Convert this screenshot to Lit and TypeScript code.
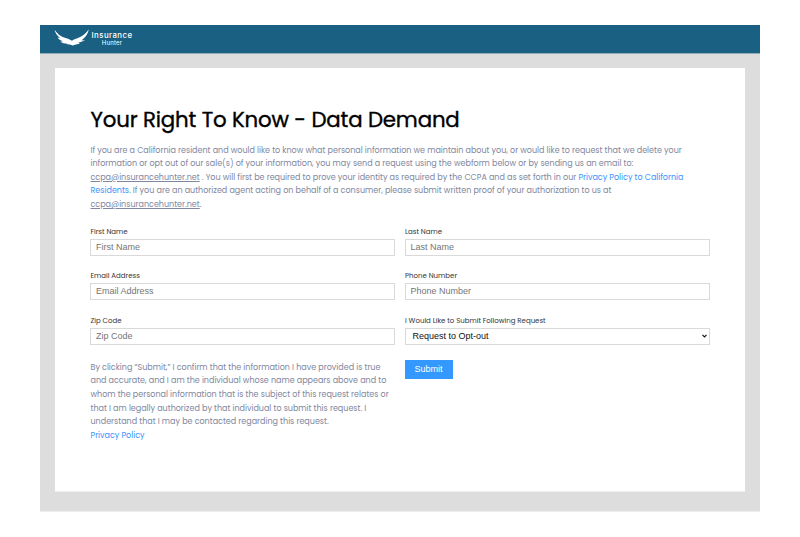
import { LitElement, html, css } from "lit";
import { customElement } from "lit/decorators.js";

@customElement("app-root")
class AppRoot extends LitElement {
  static styles = css`
    :host {
      display: block;
      box-sizing: border-box;
      height: 537px;
      padding: 25px 40px 0;
      background: #fff;
      overflow: hidden;
      font-family: Poppins, Inter, "Open Sans", sans-serif;
    }
    * { box-sizing: border-box; }
    .page { height: 487px; background: #ddd; border-bottom: 1px solid #eee; display: flex; flex-direction: column; }
    header {
      height: 29px;
      flex: none;
      background: #1a6083;
      border-bottom: 1px solid #8fadb9;
      padding: 4px 0 0 14px;
      display: flex;
      color: #fff;
    }
    .bird { width: 36px; height: 18px; display: block; flex: none; }
    .brand {
      margin-left: 1px;
      padding-top: 2px;
      width: 42px;
      display: flex;
      flex-direction: column;
      align-items: center;
      font-family: Inter, sans-serif;
      font-weight: 500;
      font-size: 7.8px;
      letter-spacing: 0.45px;
      line-height: 9px;
    }
    .brand .sub { font-size: 6px; line-height: 6.6px; font-weight: 400; letter-spacing: 0.2px; }
    main {
      margin: 14px 15px 0;
      height: 424px;
      background: #fff;
      border-bottom: 1px solid #eee;
      padding: 36px 35px 0 35.5px;
    }
    h1 {
      margin: 0;
      height: 32px;
      line-height: 32px;
      font-size: 21.33px;
      font-weight: 400;
      letter-spacing: -0.18px;
      -webkit-text-stroke: 0.35px #000;
      color: #000;
      white-space: nowrap;
    }
    .copy { color: #8087a0; font-size: 8px; }
    .intro { margin-top: 7.5px; }
    .line { height: 13.65px; line-height: 13.65px; white-space: pre; }
    .mail { text-decoration: underline; text-underline-offset: 1px; }
    .link { color: #3b93fb; }
    .form {
      margin-top: 13px;
      display: grid;
      grid-template-columns: 305px 305px;
      column-gap: 9.5px;
      grid-auto-rows: 44.5px;
      margin-left: -0.5px;
    }
    label { display: block; font-size: 7px; line-height: 13px; height: 14.1px; color: #333; padding-left: 0.5px; white-space: nowrap; }
    .field {
      height: 17px;
      border: 1px solid #d9d9d9;
      padding: 0 2px 0 5px;
      display: flex;
      align-items: center;
      justify-content: space-between;
      font: 9px/15px "Liberation Sans", Arial, sans-serif;
      color: #757575;
    }
    .select { color: #111; padding-left: 7px; }
    .chev { width: 5px; height: 4px; display: block; }
    .foot { display: grid; grid-template-columns: 305px 305px; column-gap: 9.5px; margin-left: -0.5px; }
    .foot .copy { padding-left: 0.5px; margin-top: 2.5px; }
    button {
      display: block;
      width: 48px;
      height: 18.5px;
      margin: 2px 0 0;
      padding: 0;
      border: 0;
      background: #3399ff;
      color: #fff;
      font: 9px/18px "Liberation Sans", Arial, sans-serif;
    }
  `;

  private field(name: string) {
    return html`<div>
      <label>${name}</label>
      <div class="field">${name}</div>
    </div>`;
  }

  render() {
    return html`
      <div class="page">
        <header>
          <svg class="bird" viewBox="0 0 36 18" fill="#fff">
            <path d="M0.5 0.8C3.5 5 6.5 7.6 11.5 9C14.2 9.8 16.2 10.6 18 11.8C20 10.2 22 9.8 24.5 8.8C29 7 32.2 4.2 34.8 0.3C34 5 31 9 27.4 11.4L31 11C28.6 12.8 26.4 13.2 24.2 13.8L26 14.4C23.2 15 20.8 15.6 18.6 16.6C17 15.4 14.4 15.6 12 15L13.6 14.6C10.6 14.6 8 14 6.2 12.4L9 12.4C6.4 11.6 4.6 10.4 3.6 8.6L6 9C3.4 7 1.4 4.4 0.5 0.8Z" />
          </svg>
          <div class="brand">
            <span>Insurance</span>
            <span class="sub">Hunter</span>
          </div>
        </header>
        <main>
          <h1>Your Right To Know - Data Demand</h1>
          <div class="copy intro">
            <div class="line">If you are a California resident and would like to know what personal information we maintain about you, or would like to request that we delete your</div>
            <div class="line">information or opt out of our sale(s) of your information, you may send a request using the webform below or by sending us an email to:</div>
            <div class="line"><span class="mail">ccpa@insurancehunter.net</span> . You will first be required to prove your identity as required by the CCPA and as set forth in our <span class="link">Privacy Policy to California</span></div>
            <div class="line"><span class="link">Residents.</span> If you are an authorized agent acting on behalf of a consumer, please submit written proof of your authorization to us at</div>
            <div class="line"><span class="mail">ccpa@insurancehunter.net</span>.</div>
          </div>
          <div class="form">
            ${this.field("First Name")}
            ${this.field("Last Name")}
            ${this.field("Email Address")}
            ${this.field("Phone Number")}
            ${this.field("Zip Code")}
            <div>
              <label>I Would Like to Submit Following Request</label>
              <div class="field select">
                Request to Opt-out
                <svg class="chev" viewBox="0 0 5 4"><path d="M0.5 0.8L2.5 2.8L4.5 0.8" fill="none" stroke="#111" stroke-width="1.2" /></svg>
              </div>
            </div>
          </div>
          <div class="foot">
            <div class="copy">
              <div class="line">By clicking “Submit,” I confirm that the information I have provided is true</div>
              <div class="line">and accurate, and I am the individual whose name appears above and to</div>
              <div class="line">whom the personal information that is the subject of this request relates or</div>
              <div class="line">that I am legally authorized by that individual to submit this request. I</div>
              <div class="line">understand that I may be contacted regarding this request.</div>
              <div class="line"><span class="link">Privacy Policy</span></div>
            </div>
            <div><button>Submit</button></div>
          </div>
        </main>
      </div>
    `;
  }
}
